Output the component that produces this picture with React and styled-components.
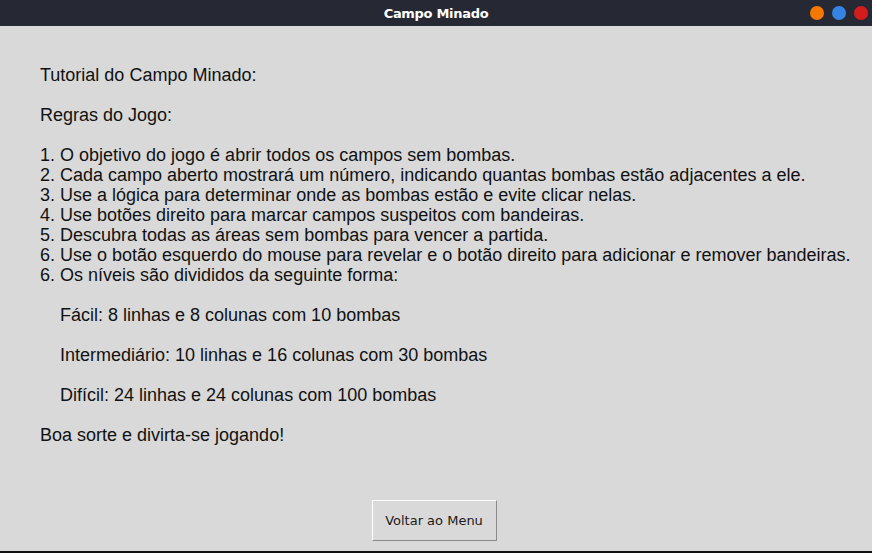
import React from "react";
import styled, { createGlobalStyle } from "styled-components";

const Global = createGlobalStyle`
  html, body { margin: 0; padding: 0; background: #d9d9d9; }
  * { box-sizing: border-box; }
`;

const Window = styled.div`
  width: 872px;
  height: 553px;
  display: flex;
  flex-direction: column;
  background: #d9d9d9;
  border-bottom: 2px solid #111;
  overflow: hidden;
`;

const TitleBar = styled.div`
  height: 26px;
  flex: none;
  background: #262833;
  display: flex;
  align-items: center;
  justify-content: center;
  position: relative;
`;

const Title = styled.div`
  color: #ffffff;
  font-family: "DejaVu Sans", sans-serif;
  font-weight: bold;
  font-size: 13px;
  letter-spacing: -0.3px;
`;

const Controls = styled.div`
  position: absolute;
  right: 4px;
  top: 6px;
  display: flex;
  gap: 8px;
`;

const Dot = styled.span`
  width: 14px;
  height: 14px;
  border-radius: 50%;
  background: ${(p) => p.$color};
`;

const Content = styled.div`
  flex: 1;
  padding: 39px 0 0 40px;
  font-family: "Liberation Sans", Arial, sans-serif;
  font-size: 18px;
  line-height: 20px;
  color: #111;
`;

const Line = styled.div`
  height: 20px;
  white-space: pre;
  padding-left: ${(p) => (p.$indent ? "20px" : "0")};
`;

const Footer = styled.div`
  display: flex;
  justify-content: center;
  padding: 0 4px 10px 0;
`;

const Button = styled.button`
  width: 125px;
  height: 41px;
  background: #d9d9d9;
  border: 1px solid;
  border-color: #ffffff #8a8a8a #8a8a8a #ffffff;
  font-family: "DejaVu Sans", sans-serif;
  font-size: 13px;
  color: #1a1a1a;
  padding: 0;
`;

const lines = [
  { t: "Tutorial do Campo Minado:" },
  { t: "" },
  { t: "Regras do Jogo:" },
  { t: "" },
  { t: "1. O objetivo do jogo é abrir todos os campos sem bombas." },
  { t: "2. Cada campo aberto mostrará um número, indicando quantas bombas estão adjacentes a ele." },
  { t: "3. Use a lógica para determinar onde as bombas estão e evite clicar nelas." },
  { t: "4. Use botões direito para marcar campos suspeitos com bandeiras." },
  { t: "5. Descubra todas as áreas sem bombas para vencer a partida." },
  { t: "6. Use o botão esquerdo do mouse para revelar e o botão direito para adicionar e remover bandeiras." },
  { t: "6. Os níveis são divididos da seguinte forma:" },
  { t: "" },
  { t: "Fácil: 8 linhas e 8 colunas com 10 bombas", i: true },
  { t: "" },
  { t: "Intermediário: 10 linhas e 16 colunas com 30 bombas", i: true },
  { t: "" },
  { t: "Difícil: 24 linhas e 24 colunas com 100 bombas", i: true },
  { t: "" },
  { t: "Boa sorte e divirta-se jogando!" },
];

export default function App() {
  return (
    <>
      <Global />
      <Window>
        <TitleBar>
          <Title>Campo Minado</Title>
          <Controls>
            <Dot $color="#f57900" />
            <Dot $color="#3584e4" />
            <Dot $color="#d51c1c" />
          </Controls>
        </TitleBar>
        <Content>
          {lines.map((l, k) => (
            <Line key={k} $indent={l.i}>{l.t}</Line>
          ))}
        </Content>
        <Footer>
          <Button>Voltar ao Menu</Button>
        </Footer>
      </Window>
    </>
  );
}
